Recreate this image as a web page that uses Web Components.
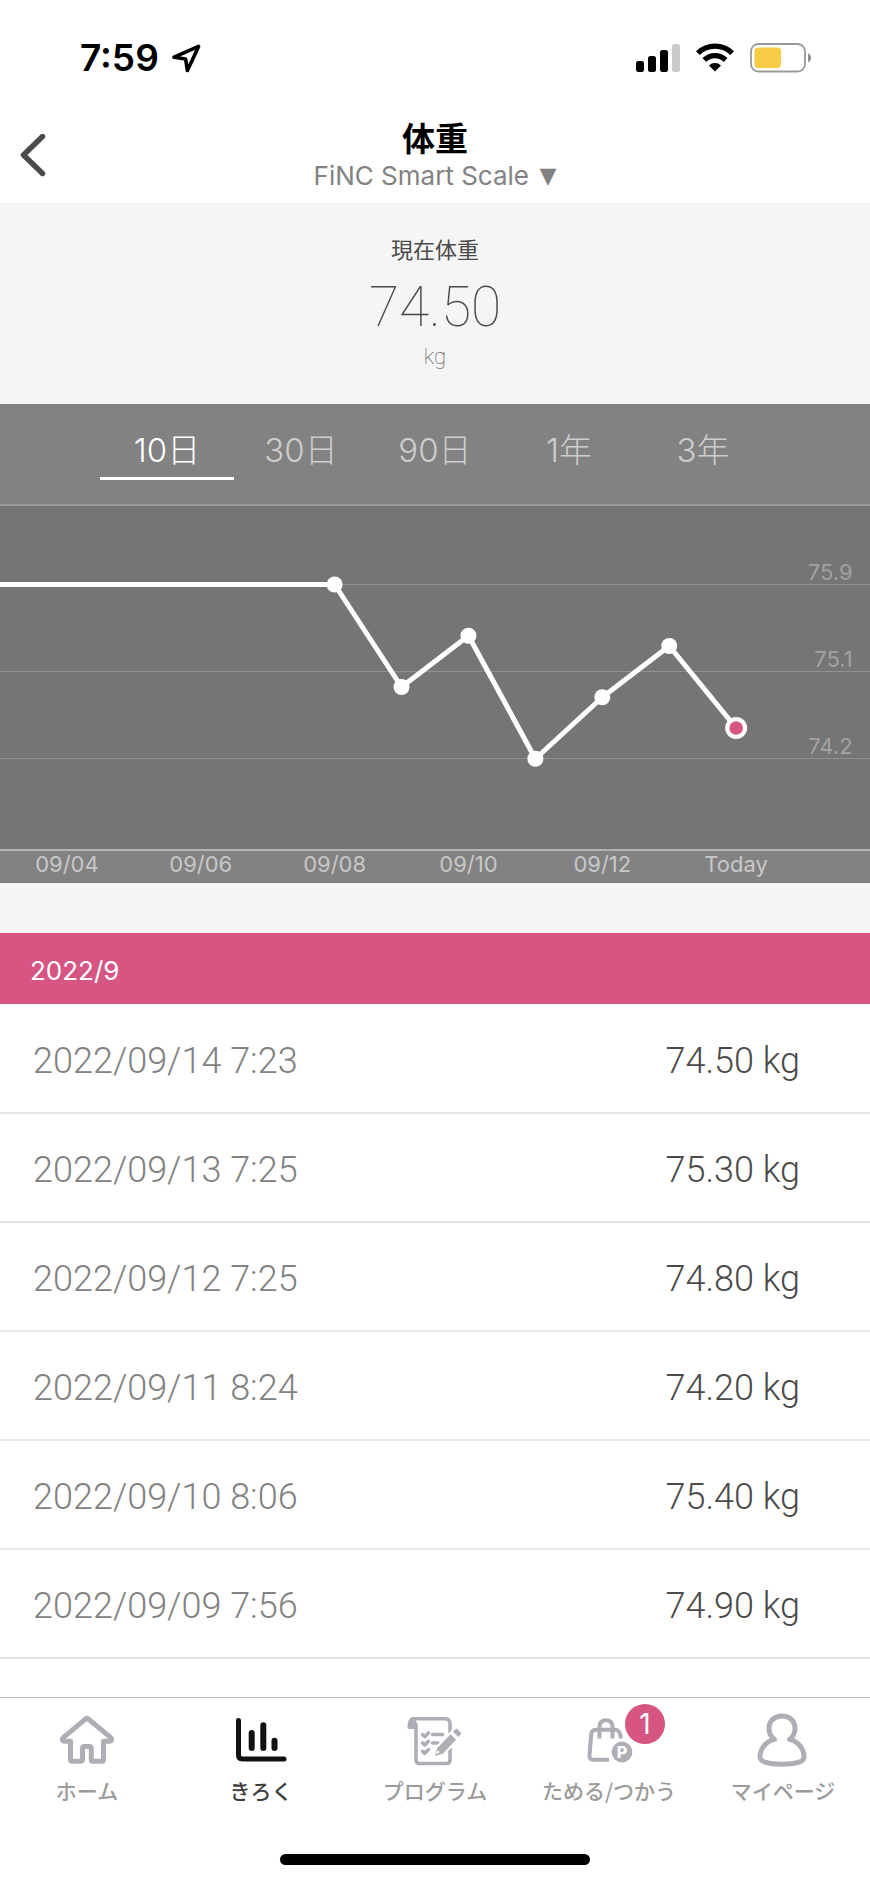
<!DOCTYPE html>
<html lang="ja">
<head>
<meta charset="utf-8">
<meta name="viewport" content="width=device-width, initial-scale=1">
<title>体重</title>
<style>
  html { background: #fff; }
  body {
    margin: 0;
    font-family: Inter, "Noto Sans CJK JP", sans-serif;
    color: #4a4a4a;
    --pink: #d65583;
    --panel: #828282;
    --plot: #757575;
    --muted: #828282;
  }
</style>
</head>
<body>
<weight-screen></weight-screen>

<script>
const define = (name, html, setup) => {
  const template = document.createElement('template');
  template.innerHTML = html;
  customElements.define(name, class extends HTMLElement {
    constructor() {
      super();
      this.attachShadow({ mode: 'open' }).append(template.content.cloneNode(true));
    }
    connectedCallback() {
      if (setup) setup(this, this.shadowRoot);
    }
  });
};

define('status-bar', `
<style>
  :host { display: flex; align-items: center; justify-content: space-between; height: 116px; padding: 0 59px 0 80px; color: #000; }
  div { display: flex; align-items: center; }
  .left { gap: 12px; }
  .right { gap: 16px; }
  time { font-size: 37px; font-weight: 600; line-height: 44px; }
  svg { display: block; }
</style>
<div class="left">
  <time>7:59</time>
  <svg width="30" height="30" viewBox="0 0 30 30" fill="none" stroke="#000" stroke-width="3.6" stroke-linejoin="round" aria-label="位置情報"><path d="M27.6 3.4 3 14.2l11.6 1.8 1.8 11.4z"/></svg>
</div>
<div class="right">
  <svg width="44" height="30" viewBox="0 0 44 30" aria-label="電波"><rect y="18" width="8" height="11" rx="2.5"/><rect x="12" y="13" width="8" height="16" rx="2.5"/><rect x="24" y="7" width="8" height="22" rx="2.5"/><rect x="36" y="1" width="8" height="28" rx="2.5" fill="#cbcbcb"/></svg>
  <svg width="38" height="30" viewBox="0 0 38 30" fill="none" stroke="#000" stroke-width="5.4" aria-label="Wi-Fi"><path d="M1.8 10.2a24.5 24.5 0 0 1 34.4 0"/><path d="M8.4 17a15 15 0 0 1 21.200 0"/><path d="M19 28.6l-6-6.200a8.500 8.500 0 0 1 12 0z" fill="#000" stroke="none"/></svg>
  <svg width="61" height="30" viewBox="0 0 61 30" aria-label="バッテリー"><rect x="1" y="1" width="54" height="27.5" rx="7.5" fill="none" stroke="#999" stroke-width="1.8"/><rect x="4.500" y="4.500" width="26.500" height="20.500" rx="4" fill="#f6cb45"/><path d="M58 10.200c4 1.500 4 7.600 0 9z" fill="#8c8c8c"/></svg>
</div>`);

define('page-header', `
<style>
  :host { display: grid; grid-template-columns: 1fr auto 1fr; align-items: center; padding: 3px 0 10px; }
  button { justify-self: start; display: block; border: 0; padding: 8px 20px; background: none; cursor: pointer; }
  svg { display: block; }
  h1 { margin: 0; font-size: 33px; font-weight: 700; line-height: 40px; color: #000; text-align: center; }
  .source { display: flex; align-items: center; justify-content: center; gap: 10px; height: 34px; color: var(--muted); font-size: 26px; line-height: 34px; }
  select { appearance: none; border: 0; margin: 0; padding: 0; background: none; color: inherit; font: inherit; cursor: pointer; }
  .mark { font-family: "DejaVu Sans", sans-serif; font-size: 22px; line-height: 30px; pointer-events: none; }
</style>
<button type="button" aria-label="戻る">
  <svg width="26" height="44" viewBox="0 0 26 44" fill="none" stroke="#4a4a4a" stroke-width="5.400" stroke-linecap="round" stroke-linejoin="round"><path d="M22.500 2.500 3.500 21l19 18.500"/></svg>
</button>
<div>
  <h1>体重</h1>
  <div class="source">
    <select aria-label="データ元"><option>FiNC Smart Scale</option></select>
    <span class="mark" aria-hidden="true">▼</span>
  </div>
</div>`);

define('current-weight', `
<style>
  :host { display: block; padding: 30px 0 34px; background: #f5f5f5; text-align: center; }
  p { margin: 0; }
  .label { font-size: 22px; line-height: 34px; }
  .value { margin: 8px 0 4px; font: 100 55px/64px Roboto, sans-serif; }
  .unit { font: 100 22px/27px Roboto, sans-serif; }
</style>
<p class="label"><slot name="label"></slot></p>
<p class="value"><slot></slot></p>
<p class="unit"><slot name="unit"></slot></p>`);

define('range-tabs', `
<style>
  :host { display: block; padding-bottom: 24px; background: var(--panel); border-bottom: 2px solid #9b9b9b; }
  div { display: grid; grid-template-columns: repeat(5, 1fr); width: 77%; margin: 0 auto; }
  button { border: 0; border-bottom: 3px solid transparent; padding: 28px 0 9px; background: none; color: #cdcdcd; font: 300 33px/36px Inter, "Noto Sans CJK JP", sans-serif; cursor: pointer; }
  button[aria-selected="true"] { color: #fff; border-color: #fff; }
</style>
<div role="tablist" aria-label="期間">
  <button type="button" role="tab" aria-selected="true">10日</button>
  <button type="button" role="tab" aria-selected="false">30日</button>
  <button type="button" role="tab" aria-selected="false">90日</button>
  <button type="button" role="tab" aria-selected="false">1年</button>
  <button type="button" role="tab" aria-selected="false">3年</button>
</div>`, (host, root) => {
  const tabs = [...root.querySelectorAll('button')];
  tabs.forEach(tab => {
    tab.onclick = () => tabs.forEach(t => t.setAttribute('aria-selected', t === tab));
  });
});

define('weight-chart', `
<style>
  :host { display: block; background: var(--panel); }
  svg { display: block; width: 100%; height: 343px; background: var(--plot); }
  .grid { stroke: #909090; stroke-width: 1; }
  .line { stroke: #fff; stroke-width: 5; stroke-linecap: round; }
  text { fill: #a2a2a2; font-size: 22px; font-weight: 400; text-anchor: end; }
  .days { display: grid; grid-template-columns: repeat(6, 2fr) 1fr; padding-bottom: 6px; border-top: 2px solid #b4b4b4; color: #c8c8c8; font-size: 22px; font-weight: 400; line-height: 26px; text-align: center; }
</style>
<svg role="img" aria-label="体重の推移"></svg>
<div class="days"><span>09/04</span><span>09/06</span><span>09/08</span><span>09/10</span><span>09/12</span><span>Today</span></div>`,
(host, root) => {
  // Thirteen half-steps span the plot; one kilogram is 102.5 units high.
  const svg = root.querySelector('svg');
  const x = step => (step / 13 * 100) + '%';
  const y = kg => 78.5 + (75.9 - kg) * 102.5;
  const add = (tag, attrs, text) => {
    const el = document.createElementNS('http://www.w3.org/2000/svg', tag);
    for (const key in attrs) el.setAttribute(key, attrs[key]);
    if (text) el.textContent = text;
    svg.append(el);
  };
  [['75.9', 78.5], ['75.1', 165.5], ['74.2', 252.5]].forEach(([label, top]) => {
    add('line', { class: 'grid', x1: 0, x2: '100%', y1: top, y2: top });
    add('text', { x: '98%', y: top - 5 }, label);
  });
  const points = [[0, 75.9], [5, 75.9], [6, 74.9], [7, 75.4], [8, 74.2], [9, 74.8], [10, 75.3], [11, 74.5]];
  points.slice(1).forEach(([step, kg], i) => {
    add('line', { class: 'line', x1: x(points[i][0]), y1: y(points[i][1]), x2: x(step), y2: y(kg) });
  });
  points.slice(1).forEach(([step, kg], i, all) => {
    const last = i === all.length - 1;
    add('circle', { cx: x(step), cy: y(kg), r: last ? 11 : 8, fill: '#fff' });
    if (last) add('circle', { cx: x(step), cy: y(kg), r: 6.8, fill: 'var(--pink)' });
  });
});

define('record-list', `
<style>
  :host { display: block; border-top: 50px solid #f5f5f5; }
  h2 { margin: 0; padding: 22px 30px 17px; background: var(--pink); color: #fff; font-size: 26px; font-weight: 400; line-height: 32px; }
  table { width: 100%; border-collapse: collapse; font: 300 36px/44px Roboto, sans-serif; }
  th, td { box-sizing: border-box; height: 109px; padding: 5px 0 0; border-bottom: 2px solid #e6e6e6; font-weight: 300; }
  th { padding-left: 33px; color: var(--muted); text-align: left; }
  td { padding-right: 70px; text-align: right; }
</style>
<h2><slot></slot></h2>
<table><tbody></tbody></table>`, (host, root) => {
  const body = root.querySelector('tbody');
  [
    ['2022/09/14 7:23', '74.50 kg'],
    ['2022/09/13 7:25', '75.30 kg'],
    ['2022/09/12 7:25', '74.80 kg'],
    ['2022/09/11 8:24', '74.20 kg'],
    ['2022/09/10 8:06', '75.40 kg'],
    ['2022/09/09 7:56', '74.90 kg'],
  ].forEach(([date, weight]) => {
    const row = body.insertRow();
    const head = document.createElement('th');
    head.scope = 'row';
    head.textContent = date;
    row.append(head);
    row.insertCell().textContent = weight;
  });
});

define('nav-item', `
<style>
  :host { display: block; color: #9b9b9b; --ink: #afaeb6; }
  :host([current]) { color: #404040; --ink: #111; }
  a { display: flex; flex-direction: column; align-items: center; gap: 10px; color: inherit; text-decoration: none; font: 500 21px/24px "Noto Sans CJK JP", sans-serif; white-space: nowrap; }
  .icon { position: relative; width: 56px; height: 56px; color: var(--ink); }
</style>
<a href="#"><span class="icon"><slot name="icon"></slot><slot name="badge"></slot></span><span><slot></slot></span></a>`);

define('count-badge', `
<style>
  :host { position: absolute; left: 44px; top: -8px; width: 40px; height: 40px; border-radius: 50%; background: var(--pink); color: #fff; font: 400 28px/40px Inter, sans-serif; text-align: center; }
</style>
<slot></slot>`);

define('bottom-nav', `
<style>
  :host { display: block; margin-top: auto; padding: 14px 0 18px; border-top: 1px solid #bdbdbd; background: #fff; }
  nav { display: grid; grid-template-columns: repeat(5, 1fr); }
  svg { display: block; width: 56px; height: 56px; overflow: visible; fill: none; stroke: currentColor; stroke-width: 5; stroke-linecap: round; stroke-linejoin: round; }
  .handle { width: 310px; height: 11px; margin: 52px auto 0; border-radius: 6px; background: #000; }
</style>
<nav aria-label="メイン">
  <nav-item>
    <svg slot="icon" viewBox="0 0 56 56"><path d="M11.500 29.200H5.500C3.200 29.200 2.600 27 4.500 25.400L27 6.700q1-.8 2 0L51.500 25.400C53.400 27 52.800 29.200 50.500 29.200H44.500V47.500q0 1.700-1.700 1.700H34q-1.700 0-1.700-1.700V36.500q0-2-2-2H25.500q-2 0-2 2V47.500q0 1.700-1.700 1.700H13.200q-1.700 0-1.700-1.700z"/></svg>
    ホーム
  </nav-item>
  <nav-item current>
    <svg slot="icon" viewBox="0 0 56 56"><path d="M5.500 8.500V43q0 4 4 4H51"/><path stroke-width="6" d="M18.700 21v15M30.300 13.300v22.700M41.500 28.700v7.300"/></svg>
    きろく
  </nav-item>
  <nav-item>
    <svg slot="icon" viewBox="0 0 56 56"><g stroke-width="3.600"><path d="M9 12V48q0 3.500 3.500 3.500H39.500q3.500 0 3.500-3.500V12q0-5.200-5.200-5.200H6"/><path d="M6.500 5C2.500 5 .5 9 .5 15.500q0 1.500 1.500 1.500H9V8z" fill="currentColor" stroke="none"/><path d="M15.500 22.700l2.300 2 3.600-3.700M15.500 31l2.300 2 3.600-3.700M15.500 39.300l2.300 2 3.600-3.700M25.500 22.500H35.500M25.500 31H31"/></g><g fill="currentColor" stroke="#fff" stroke-width="2"><path d="M26.500 45.500l2.800-10L43.500 20.800l7 7L36.500 42.500z"/><path d="M44.500 19.800l3-3.100q2-1.800 4 0l2.700 2.800q1.800 2 0 4L51.500 26.500z"/></g><path d="M28.500 42.200l2.300-4 2.100 2.100z" fill="#fff" stroke="none"/></svg>
    プログラム
  </nav-item>
  <nav-item>
    <svg slot="icon" viewBox="0 0 56 56"><g stroke-width="4" stroke-linecap="butt"><path d="M28 47.700H12.500Q8.200 47.700 8.500 43.500L10.200 22Q10.700 17.700 15 17.700H34.500Q39 17.700 40 26.500"/><path d="M18.500 26.500V15Q18.500 8.200 25 8.200T31.500 15V26.500"/></g><circle cx="41" cy="40" r="10.400" fill="currentColor" stroke="none"/><text x="41" y="46" fill="#fff" stroke="none" text-anchor="middle" font-family="Inter, sans-serif" font-size="16" font-weight="800">P</text></svg>
    <count-badge slot="badge">1</count-badge>
    ためる/つかう
  </nav-item>
  <nav-item>
    <svg slot="icon" viewBox="0 0 56 56"><path d="M19.500 27.400C15.500 24.500 14 20.500 14 16.500 14 9 19.500 4 27 4S40 9 40 16.500C40 20.500 38.500 24.500 34.500 27.400 43.500 29.500 49 37 49 45 49 50 40 52.200 27 52.200S5 50 5 45C5 37 10.500 29.500 19.500 27.400z"/></svg>
    マイページ
  </nav-item>
</nav>
<div class="handle"></div>`);

define('weight-screen', `
<style>
  :host { display: flex; flex-direction: column; min-height: 100vh; background: #fff; }
</style>
<status-bar></status-bar>
<page-header></page-header>
<current-weight><span slot="label">現在体重</span>74.50<span slot="unit">kg</span></current-weight>
<range-tabs></range-tabs>
<weight-chart></weight-chart>
<record-list>2022/9</record-list>
<bottom-nav></bottom-nav>`);
</script>
</body>
</html>
